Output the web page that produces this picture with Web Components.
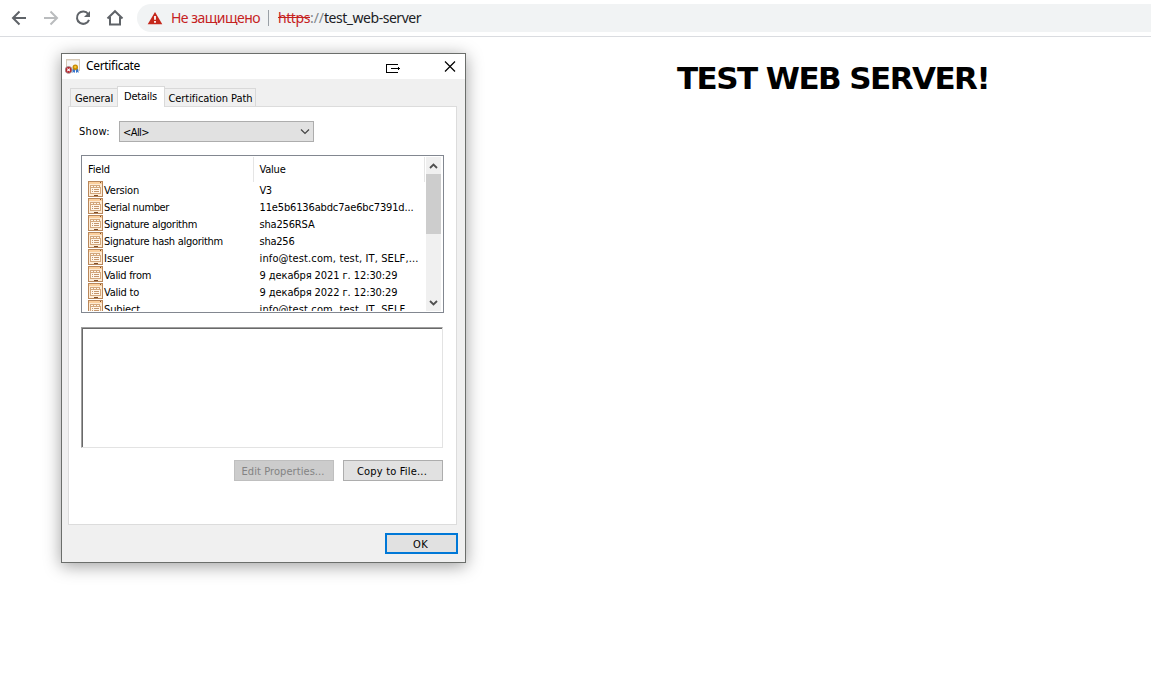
<!DOCTYPE html>
<html lang="ru">
<head>
<meta charset="utf-8">
<title>test_web-server</title>
<style>
html,body{margin:0;height:100%;overflow:hidden;background:#fff}
</style>
</head>
<body>
<web-browser></web-browser>
<script>
const define = (name, html, setup) => customElements.define(name, class extends HTMLElement {
  connectedCallback() {
    if (this.shadowRoot) return;
    this.attachShadow({mode: 'open'}).innerHTML = html;
    if (setup) setup(this, this.shadowRoot);
  }
});

// Single-line label whose tracking is adjusted to the width given in "w".
define('fit-text', `<style>:host{display:inline-block;white-space:pre}span{display:inline-block;white-space:pre}:host([strike]) span{text-decoration:line-through}</style><span><slot></slot></span>`, (el, root) => {
  const w = +el.getAttribute('w');
  if (!w) return;
  const s = root.querySelector('span');
  el.style.width = w + 'px';
  const n = el.textContent.length;
  s.style.letterSpacing = ((w - s.getBoundingClientRect().width) / n) + 'px';
});

define('browser-toolbar', `<style>
:host{display:flex;align-items:center;height:36px;border-bottom:1px solid #dadce0;background:#fff;box-sizing:content-box;overflow:hidden;font:14px "Noto Sans","Open Sans",sans-serif}
nav{display:flex;gap:12px;padding-left:9px;width:128px;box-sizing:border-box;flex:none;margin-right:9px}
svg{display:block;flex:none}
.bar{display:flex;align-items:center;flex:1;height:28px;margin-right:-20px;border-radius:14px;background:#f1f3f4;padding-left:10px;box-sizing:border-box}
fit-text{padding-bottom:2px}
.warn{color:#c5221f;margin-left:8px}
i{width:1px;height:16px;background:#9aa0a6;margin:0 9px 0 8px}
.s{color:#c5221f}.g{color:#80868b}.h{color:#202124}
</style>
<nav>
<svg width="20" height="20" viewBox="0 0 20 20" fill="none" stroke="#5f6368" stroke-width="2"><path d="M17 10H4M10.5 3.5 4 10l6.500 6.500"/></svg>
<svg width="20" height="20" viewBox="0 0 20 20" fill="none" stroke="#babcbe" stroke-width="2"><path d="M3 10h13M9.500 3.500 16 10l-6.500 6.500"/></svg>
<svg width="20" height="20" viewBox="0 0 20 20"><path d="M15.200 6A6.200 6.200 0 1 0 16 11.800" fill="none" stroke="#5f6368" stroke-width="2"/><path d="M17 3v6h-6z" fill="#5f6368"/></svg>
<svg width="20" height="20" viewBox="0 0 20 20" fill="none" stroke="#5f6368" stroke-width="2"><path d="M2.500 10.500 10 3.200l7.500 7.300M5 9v7.500h10V9"/></svg>
</nav>
<div class="bar">
<svg width="16" height="14" viewBox="0 0 16 14"><path d="M8 1 15.300 13.300H.7z" fill="#c5281c"/><path d="M7.100 5h1.800v3.700H7.100zM7.100 10h1.800v1.700H7.100z" fill="#fff"/></svg>
<fit-text class="warn" w="89">Не защищено</fit-text><i></i>
<fit-text class="s" strike w="32">https</fit-text><fit-text class="g" w="14">://</fit-text><fit-text class="h" w="97">test_web-server</fit-text>
</div>`);

define('cert-icon', `<style>:host{display:block;width:16px;height:16px;flex:none}svg{display:block}</style>
<svg width="16" height="16" viewBox="0 0 16 16" shape-rendering="crispEdges"><path d="M1 0h14v12H1z" fill="#e9e2d8"/><path d="M2 2h12v9H2z" fill="#f6f6f6"/><path d="M1 0h14v1H1zM1 1h1v8H1zM14 1h1v11h-1z" fill="#d5c8b6"/><g shape-rendering="auto"><path d="M7.500 9.500h2.500v4.500l-1.200-1-1.300 1zM11 9.500h2l.7 4.500-1.300-1-1.400 1z" fill="#3975c9"/><circle cx="10.300" cy="8.300" r="2.700" fill="#c98a00"/><circle cx="10.300" cy="8" r="1.200" fill="#f4c537"/><circle cx="3.600" cy="10.900" r="3.400" fill="#b9232b" stroke="#9a9598" stroke-width=".8"/><path d="m2.300 9.600 2.600 2.600m0-2.600-2.600 2.600" stroke="#fff" stroke-width="1.100"/></g></svg>`);

define('field-icon', `<style>:host{display:block;width:16px;height:17px;flex:none}svg{display:block}</style>
<svg width="16" height="17" viewBox="0 0 16 17" shape-rendering="crispEdges"><path d="M0 0h15v16H0z" fill="#b9875b"/><path d="M1 1h13v14H1z" fill="#fdebd5"/><path d="M1 1h13v2H1z" fill="#fbcf9d"/><path d="M2 4h10v2h1v7H2z" fill="#d3a77c"/><path d="M3 5h2v1H3zM6 5h2v1H6zM9 5h2v1H9zM3 7h9v5H3z" fill="#fff6ea"/><path d="M4 8h1v1H4zM6 8h5v1H6zM4 10h1v1H4zM6 10h5v1H6z" fill="#c4956c"/><path d="M12 1h1v1h-1zM6 14h4v1H6z" fill="#7b4c2a"/></svg>`);

define('cert-row', `<style>:host{display:grid;grid-template-columns:171.500px 1fr;height:17px;line-height:19px}div{display:flex;height:17px}</style><div><field-icon></field-icon><slot name="f"></slot></div><div><slot name="v"></slot></div>`);

define('tab-item', `<style>:host{display:block;box-sizing:border-box;height:18px;line-height:19px;border:1px solid #d9d9d9;border-bottom:0;background:#f0f0f0;padding-left:4px}:host([active]){height:21px;background:#fff;line-height:20px;margin:0 -1px -1px;padding-left:6px;position:relative}</style><slot></slot>`);

define('push-button', `<style>:host{display:flex;align-items:center;justify-content:center;box-sizing:border-box;width:100px;height:21px;border:1px solid #adadad;background:#e1e1e1;padding:2px 2px 0 0}:host([disabled]){background:#ccc;border-color:#bfbfbf;color:#838383}:host([primary]){width:73px;border:2px solid #0078d7}</style><slot></slot>`);

define('scroll-bar', `<style>:host{display:flex;flex-direction:column;width:15px;height:154px;background:#f0f0f0}svg{display:block}b{height:60px;background:#cdcdcd}span{flex:1}</style>
<svg width="15" height="17" viewBox="0 0 15 17"><path d="m4 11 3.500-3.500 3.500 3.500" fill="none" stroke="#505050" stroke-width="1.800"/></svg><b></b><span></span><svg width="15" height="17" viewBox="0 0 15 17"><path d="m4 7 3.500 3.500L11 7" fill="none" stroke="#505050" stroke-width="1.800"/></svg>`);

define('field-list', `<style>
:host{display:flex;justify-content:space-between;box-sizing:border-box;width:363px;height:158px;border:1px solid #828790;background:#fff;padding:1px 2px 1px 0}
.c{width:343px;height:154px;overflow:hidden}
.h{display:grid;grid-template-columns:172px 171px;height:24px;line-height:25px}
.h div{border-right:1px solid #e5e5e5;padding-left:6px}
.rows{padding-left:6px}
</style><div class="c"><div class="h"><div><fit-text w="22">Field</fit-text></div><div style="padding-left:5.500px"><fit-text w="26">Value</fit-text></div></div><div class="rows"></div></div><scroll-bar></scroll-bar>`, (el, root) => {
  const rows = [
    ['Version',35,'V3',12],['Serial number',65,'11e5b6136abdc7ae6bc7391d...',154],
    ['Signature algorithm',93,'sha256RSA',55],['Signature hash algorithm',119,'sha256',35],
    ['Issuer',30,'info@test.com, test, IT, SELF,...',159],['Valid from',47,'9 декабря 2021 г. 12:30:29',138],
    ['Valid to',35,'9 декабря 2022 г. 12:30:29',138],['Subject',36,'info@test.com, test, IT, SELF,...',159]];
  root.querySelector('.rows').innerHTML = rows.map(([f,a,v,b]) =>
    `<cert-row><fit-text slot="f" w="${a}">${f}</fit-text><fit-text slot="v" w="${b}">${v}</fit-text></cert-row>`).join('');
});

define('certificate-dialog', `<style>
:host{display:flex;flex-direction:column;box-sizing:border-box;width:405px;height:510px;border:1px solid #6b6e6b;background:#f0f0f0;box-shadow:0 3px 16px rgba(0,0,0,.38);color:#000;font:11px "DejaVu Sans Condensed","DejaVu Sans",sans-serif;font-stretch:condensed}
header{display:flex;align-items:center;height:25px;background:#fff;padding-left:3px}
header fit-text{font:12px "Noto Sans","Open Sans",sans-serif;margin-left:5px;padding-bottom:2px}
header .x{margin:0 9px 0 43px}
header .e{margin-left:auto;margin-top:4px}
svg{display:block}
.tabs{display:flex;align-items:flex-end;height:20px;padding:7px 0 0 8px}
.panel{box-sizing:border-box;width:389px;height:419px;margin-left:6px;border:1px solid #dcdcdc;background:#fff;padding:14px 12px 0}
.show{display:flex;align-items:center;height:21px;margin-left:-2px}
.sel{display:flex;align-items:center;justify-content:space-between;box-sizing:border-box;width:195px;height:21px;border:1px solid #adadad;background:#e1e1e1;margin-left:9px;padding:0 3px}
.sel fit-text{padding-top:1px}
field-list{margin-top:13px}
.memo{box-sizing:border-box;width:362px;height:121px;margin-top:14px;border:1px solid;border-color:#a0a0a0 #e3e3e3 #e3e3e3 #a0a0a0;box-shadow:inset 1px 1px #696969}
.btns{display:flex;gap:9px;justify-content:flex-end;margin:12px 13px 0 0;width:362px}
footer{display:flex;justify-content:flex-end;padding:8px 7px 0 0}
</style>
<header><cert-icon></cert-icon><fit-text w="54">Certificate</fit-text>
<svg class="e" width="15" height="11" viewBox="0 0 15 11" shape-rendering="crispEdges"><path d="M12 1.500H.5v8H12M5 5.500h9M12.500 4v3" fill="none" stroke="#000"/></svg>
<svg class="x" width="12" height="12" viewBox="0 0 12 12"><path d="m1 .5 10 10M11 .5 1 10.500" stroke="#000" stroke-width="1.200"/></svg></header>
<div class="tabs"><tab-item style="width:48px"><fit-text w="38">General</fit-text></tab-item><tab-item active style="width:48px"><fit-text w="33">Details</fit-text></tab-item><tab-item style="width:92px;padding-left:3.500px"><fit-text w="84">Certification Path</fit-text></tab-item></div>
<div class="panel">
<div class="show"><fit-text w="31">Show:</fit-text><div class="sel"><fit-text w="26">&lt;All&gt;</fit-text><svg width="10" height="7" viewBox="0 0 10 7"><path d="m1 1.500 4 4 4-4" fill="none" stroke="#444" stroke-width="1.200"/></svg></div></div>
<field-list></field-list>
<div class="memo"></div>
<div class="btns"><push-button disabled><fit-text w="83">Edit Properties...</fit-text></push-button><push-button><fit-text w="70">Copy to File...</fit-text></push-button></div>
</div>
<footer><push-button primary><fit-text w="15">OK</fit-text></push-button></footer>`);

define('web-browser', `<style>
:host{display:block;height:100vh;overflow:hidden}
main{display:flex;align-items:flex-start}
certificate-dialog{margin:16px 0 0 61px;flex:none}
h1{margin:21px 0 0 211px;font:bold 31px/40px "DejaVu Sans",sans-serif;color:#000}
</style><browser-toolbar></browser-toolbar><main><certificate-dialog></certificate-dialog><h1><fit-text w="312">TEST WEB SERVER!</fit-text></h1></main>`);
</script>
</body>
</html>
